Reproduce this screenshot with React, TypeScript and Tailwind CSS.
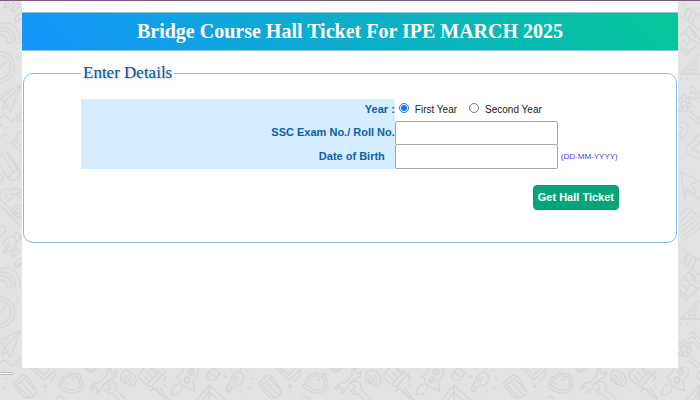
import { useState } from 'react';
import type { FormEvent } from 'react';

const YEARS = [
    { value: '1', label: 'First Year' },
    { value: '2', label: 'Second Year' },
];

// School doodles that run down both sides of the page
function SideDoodles() {
    return (
        <svg className="absolute inset-0 h-full w-full" aria-hidden="true">
            <defs>
                <pattern id="side-doodles" width="245" height="245" patternUnits="userSpaceOnUse">
                    <g fill="none" stroke="#d7d7d7" strokeWidth="1.3" strokeLinecap="round" strokeLinejoin="round">
                        {/* nib */}
                        <path d="M3 7L6 0M3 7L11 5L18 -4M3 7L9 1M11 9L17 2L20 5L14 11Z" />
                        <path d="M2 246L5 238L13 235L17 240L13 248L3 250ZM3 249L9 242M13 235L16 231L21 236L17 240" />
                        <path d="M15 18Q17 12 24 12Q22 20 16 21ZM15 22L20 17" />
                        {/* rainbow */}
                        <path d="M-4 24Q18 16 20 39Q20 43 17 42Q15 42 15 39Q15 26 0 26M-2 30Q12 29 12 39Q12 42 9 42Q7 42 7 39Q7 34 0 34" />
                        {/* clock */}
                        <circle cx="-1" cy="66" r="15.5" />
                        <circle cx="-1" cy="66" r="12" />
                        <path d="M0 67L6 60M8 66H10M6 74L7 75M16 57L19 55M17 53L19 52" />
                        {/* paper plane */}
                        <path d="M-2 95L21 84L10 112L5 101L-2 95M5 101L21 84M5 101L2 109L10 104M0 98L9 92" />
                        <path d="M0 117Q5 112 8 117T14 118M18 114Q14 117 18 121M21 112Q17 116 21 120M0 123L3 126M0 136L7 133M5 128L8 126" />
                        <path d="M22 131Q15 132 17 137L12 141L22 151M15 139L21 145" />
                        {/* pencil */}
                        <path d="M0 155L5 151Q8 151 10 154L19 168Q22 173 18 177Q14 181 9 178L-2 162M3 155L14 172M7 153L18 169M9 178Q10 170 19 168" />
                        <circle cx="-1" cy="177" r="4" />
                        <path d="M0 193Q3 185 10 189Q17 185 21 190M5 198Q8 190 14 194Q18 192 21 198" />
                        {/* pad */}
                        <path d="M0 198L22 220Q26 224 30 218M0 204L20 225M7 201L14 194Q22 188 30 198M4 208L16 220" />
                        <circle cx="18" cy="210" r="6" />
                        <circle cx="18" cy="210" r="2.5" />
                        <path d="M-2 227Q5 222 6 230L-2 238" />

                        {/* battery */}
                        <path d="M195 10Q197 6 202 9L215 19L209 29L196 18Q193 15 195 10ZM198 8L194 18M202 10L198 20M206 13L202 23" />
                        <path d="M193 3L196 6M190 15L192 17" />
                        {/* book */}
                        <path d="M189 36L200 25L211 40L199 51L192 47L189 42M194 33Q199 35 200 39Q205 38 207 43M196 31L200 39L195 47M192 39L197 43M203 33L206 37M201 29L204 32M190 48L196 54L207 44" />
                        {/* set square */}
                        <path d="M190 73L211 52V73ZM198 69L206 61V69ZM193 73V71M196 73V71M199 73V71M202 73V71M205 73V71M190 78H192M197 78H199" />
                        <path d="M200 88Q203 83 206 89T213 91M199 93Q203 88 206 94T213 96M199 98Q203 94 206 99T213 101" />
                        {/* flower */}
                        <circle cx="194" cy="103" r="3" />
                        <path d="M192 99Q191 93 195 94Q197 96 195 99Q199 94 201 98Q201 101 197 102Q203 102 201 106Q198 107 196 105Q200 110 196 111Q193 111 193 106Q191 112 188 109L191 105M191 101Q186 98 190 97" />
                        {/* ribbon */}
                        <path d="M189 122Q196 119 198 126Q198 131 192 139L189 134M190 126Q195 125 192 130L189 133M198 114L212 125M200 110L210 119M189 160V163" />
                        <path d="M196 147Q204 138 211 132M196 147Q195 151 199 153L213 160M202 148L213 138M202 148L213 154" />
                        {/* pointer */}
                        <path d="M191 171L209 180L201 183L206 191L202 194L197 187L195 198Z" />
                        {/* note sheet */}
                        <path d="M189 216L198 206L215 221M190 221L200 211M191 226L203 216M192 231L206 219M193 235L208 223M195 238L210 227M195 207L196 208M205 194L215 204M189 243L190 244" />
                    </g>
                </pattern>
            </defs>
            <rect width="100%" height="100%" fill="url(#side-doodles)" />
        </svg>
    );
}

// Doodles of the strip under the page
function FooterDoodles() {
    return (
        <svg className="block h-8 w-full" aria-hidden="true">
            <defs>
                <pattern id="footer-doodles" width="245" height="64" patternUnits="userSpaceOnUse">
                    <g fill="none" stroke="#d6d6d6" strokeWidth="1.4" strokeLinecap="round" strokeLinejoin="round">
                        {/* eraser */}
                        <path d="M15 14L21 8Q25 6 28 9L36 22Q37 26 34 28L29 30Q25 30 23 28L14 17Q13 15 15 14ZM16 17L27 9M18 18L29 29M22 15L33 27M26 12L36 23M20 24L16 20" />
                        <path d="M31 0L44 12L55 2M35 0L44 7L50 0M50 13Q56 8 56 3M44 19H46M44 24H46M44 17H46" />
                        {/* shield */}
                        <path d="M62 9Q67 8 69 4Q73 7 80 6L83 19Q79 26 70 25Q61 23 58 18Q61 13 62 9ZM64 11Q69 9 70 7Q74 9 78 9L80 18Q77 23 71 22Q64 20 61 17Q64 14 64 11ZM66 15L67 17M72 11L74 12" />
                        <path d="M85 0Q91 8 97 0M88 0Q91 4 94 0" />
                        {/* wrenches */}
                        <path d="M90 20L95 15L101 14L107 7Q105 2 111 0L110 4L113 6L116 3Q117 10 111 10L103 17Q102 23 96 25L98 21L94 18L92 22Z" />
                        <path d="M105 15Q110 11 115 15Q117 19 115 21L126 31M105 15L110 18L109 22L105 22Q108 28 112 25L120 33" />
                        {/* leaf */}
                        <path d="M121 13Q119 3 127 2Q136 5 136 14Q134 20 129 17L121 13ZM125 7L131 15M129 6L133 13M123 10L126 14" />
                        {/* notebook */}
                        <path d="M139 6Q147 -3 148 -3L162 7L152 18Q150 20 147 17L139 10ZM143 7L148 12M147 4L153 10M151 1L157 7M147 16L160 3" />
                        <path d="M166 3L162 7L166 9L163 13M164 17L166 19M151 18L157 23M150 23L156 20L164 30M158 25L169 32M160 20L168 31" />
                        {/* rocket */}
                        <path d="M180 11L176 9L183 4L184 -3Q192 -6 198 -1Q200 7 193 13L195 23L187 20L181 17ZM179 16Q173 16 171 27Q181 27 182 20" />
                        <circle cx="187" cy="12" r="3" />
                        <circle cx="191" cy="4" r="3" />
                        <path d="M185 14L189 10M189 6L193 2" />
                        {/* roof */}
                        <path d="M195 34L209 17L230 36M201 34L209 24L220 34M209 17V34" />
                        <path d="M206 9Q210 2 213 0L220 5L216 11Q211 14 206 9ZM210 5L216 9" />
                        {/* bulb */}
                        <path d="M231 13Q231 5 239 4Q245 6 243 13Q241 18 234 18L229 24Q226 24 226 20L231 13ZM228 17L232 21M226 20L230 24M235 8L233 14M238 9L235 15M224 8L227 9M230 0L231 2M241 0L240 2M242 24L241 22" />
                        <path d="M5 11H7M2 3L4 2M3 19L5 20M57 30Q60 26 64 31" />
                    </g>
                </pattern>
            </defs>
            <rect width="100%" height="100%" fill="url(#footer-doodles)" />
        </svg>
    );
}

export default function App() {
    const [year, setYear] = useState('1');
    const [rollNo, setRollNo] = useState('');
    const [dob, setDob] = useState('');

    const handleSubmit = (e: FormEvent) => {
        e.preventDefault();
    };

    const labelClass = 'flex items-center justify-end bg-[#d6edff] text-[11px] font-bold text-[#0b60a8]';
    const inputClass = 'h-full w-[163px] rounded-xs border border-[#a5a5a5] bg-white px-1 text-xs text-black';

    return (
        <div className="relative flex min-h-screen flex-col border-t border-[#775a7e] bg-[#e3e3e3] font-['Liberation_Sans',Arial,sans-serif]">
            <SideDoodles />

            <main className="relative mx-[22px] flex-1 bg-white pt-[11px]">
                <h1 className="border-y border-[#8fc4d8] bg-linear-[45deg,#1494ff,#05c896] text-center font-['Liberation_Serif',serif] text-xl leading-[37px] font-bold text-white">
                    Bridge Course Hall Ticket For IPE MARCH 2025
                </h1>

                <form onSubmit={handleSubmit}>
                    <fieldset className="mx-px mt-3 rounded-[10px] border border-[#7dbdec] px-[57px] pb-8">
                        <legend className="px-0.5 font-['Liberation_Serif',serif] text-[17px] leading-5 text-[#0f5288] text-shadow-[1px_1px_2px_#a9c9e2]">
                            Enter Details
                        </legend>

                        <div className="mt-4 grid grid-cols-[7fr_5fr] grid-rows-[21px_24px_25px]">
                            <span id="year-label" className={labelClass}>Year :</span>
                            <div role="radiogroup" aria-labelledby="year-label" className="flex items-center gap-3 pl-1 text-[10px] text-[#222]">
                                {YEARS.map(y => (
                                    <label key={y.value} className="flex items-baseline gap-1.5">
                                        <input
                                            type="radio"
                                            name="year"
                                            className="size-[10px] accent-[#0b75ff]"
                                            value={y.value}
                                            checked={year === y.value}
                                            onChange={() => setYear(y.value)}
                                        />
                                        {y.label}
                                    </label>
                                ))}
                            </div>

                            <label htmlFor="roll-no" className={labelClass}>SSC Exam No./ Roll No.</label>
                            <div>
                                <input id="roll-no" type="text" className={inputClass} value={rollNo} onChange={e => setRollNo(e.target.value)} />
                            </div>

                            <label htmlFor="dob" className={`${labelClass} pr-2.5`}>Date of Birth</label>
                            <div className="flex items-center gap-[3px]">
                                <input id="dob" type="text" className={inputClass} value={dob} onChange={e => setDob(e.target.value)} />
                                <span className="text-[8px] whitespace-nowrap text-[#4a3cff]">(DD-MM-YYYY)</span>
                            </div>
                        </div>

                        <div className="mt-4 flex justify-end">
                            <button type="submit" className="h-[25px] rounded-sm border border-[#0b9a70] bg-[#04a57b] px-1 text-[11px] font-bold text-white">
                                Get Hall Ticket
                            </button>
                        </div>
                    </fieldset>
                </form>
            </main>

            <footer className="relative bg-[#e3e3e3]">
                <FooterDoodles />
                <div className="absolute top-1 left-0 h-[3px] w-[13px] rounded-r-xs border border-l-0 border-[#bdbdbd] bg-white" />
            </footer>
        </div>
    );
}
